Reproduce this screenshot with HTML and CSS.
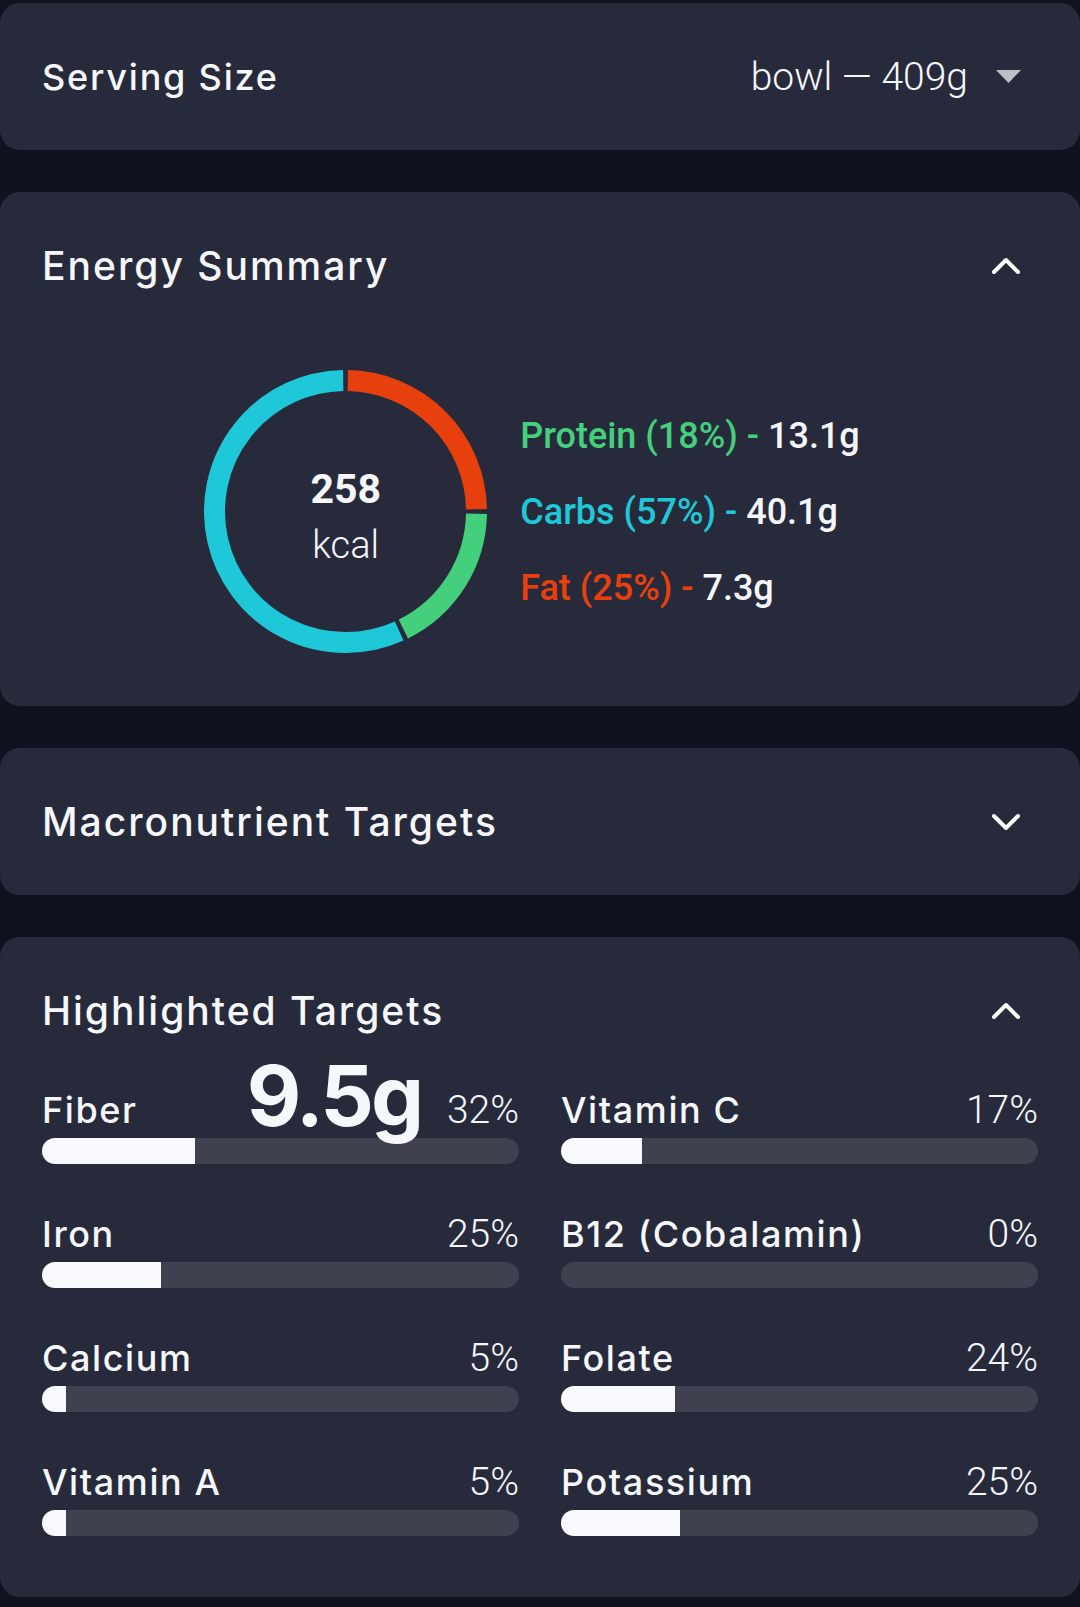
FILE: index.html
```html
<!DOCTYPE html>
<html lang="en">
<head>
    <meta charset="UTF-8">
    <title>Nutrition</title>
    <link rel="stylesheet" href="styles.css">
</head>
<body>
    <section class="card">
        <div class="card-header">
            <h2 class="card-title serving-title">Serving Size</h2>
            <div class="serving-select">
                <span class="serving-value">bowl — 409g</span>
                <svg class="toggle" width="25" height="13" viewBox="0 0 25 13">
                    <polygon points="0,0 25,0 12.5,13" fill="#bfc0c6"/>
                </svg>
            </div>
        </div>
    </section>

    <section class="card">
        <div class="card-header">
            <h2 class="card-title">Energy Summary</h2>
            <svg class="toggle" width="30" height="18" viewBox="0 0 30 18">
                <polyline points="3,15 15,3 27,15" fill="none" stroke="#fff" stroke-width="4" stroke-linecap="round" stroke-linejoin="round"/>
            </svg>
        </div>
        <div class="energy">
            <div class="donut">
                <svg width="283" height="283" viewBox="0 0 283 283">
                    <path d="M143.79 10.52 A131 131 0 0 1 272.48 139.21" fill="none" stroke="#e8400d" stroke-width="21"/>
                    <path d="M272.48 143.79 A131 131 0 0 1 199.34 259.04" fill="none" stroke="#43cf7b" stroke-width="21"/>
                    <path d="M195.20 260.99 A131 131 0 1 1 139.21 10.52" fill="none" stroke="#1ec8d8" stroke-width="21"/>
                </svg>
                <div class="donut-label">
                    <span class="kcal-value">258</span>
                    <span class="kcal-unit">kcal</span>
                </div>
            </div>
            <ul class="legend">
                <li><span class="protein">Protein (18%) -</span> 13.1g</li>
                <li><span class="carbs">Carbs (57%) -</span> 40.1g</li>
                <li><span class="fat">Fat (25%) -</span> 7.3g</li>
            </ul>
        </div>
    </section>

    <section class="card">
        <div class="card-header">
            <h2 class="card-title">Macronutrient Targets</h2>
            <svg class="toggle" width="30" height="18" viewBox="0 0 30 18">
                <polyline points="3,3 15,15 27,3" fill="none" stroke="#fff" stroke-width="4" stroke-linecap="round" stroke-linejoin="round"/>
            </svg>
        </div>
    </section>

    <section class="card">
        <div class="card-header">
            <h2 class="card-title">Highlighted Targets</h2>
            <svg class="toggle" width="30" height="18" viewBox="0 0 30 18">
                <polyline points="3,15 15,3 27,15" fill="none" stroke="#fff" stroke-width="4" stroke-linecap="round" stroke-linejoin="round"/>
            </svg>
        </div>
        <div class="targets">
            <div class="target">
                <div class="target-head">
                    <span class="target-name">Fiber</span>
                    <span class="target-pct">32%</span>
                </div>
                <div class="bar"><div class="bar-fill" style="width: 32%"></div></div>
                <span class="target-amount">9.5g</span>
            </div>
            <div class="target">
                <div class="target-head">
                    <span class="target-name">Vitamin C</span>
                    <span class="target-pct">17%</span>
                </div>
                <div class="bar"><div class="bar-fill" style="width: 17%"></div></div>
            </div>
            <div class="target">
                <div class="target-head">
                    <span class="target-name">Iron</span>
                    <span class="target-pct">25%</span>
                </div>
                <div class="bar"><div class="bar-fill" style="width: 25%"></div></div>
            </div>
            <div class="target">
                <div class="target-head">
                    <span class="target-name">B12 (Cobalamin)</span>
                    <span class="target-pct">0%</span>
                </div>
                <div class="bar"><div class="bar-fill" style="width: 0%"></div></div>
            </div>
            <div class="target">
                <div class="target-head">
                    <span class="target-name">Calcium</span>
                    <span class="target-pct">5%</span>
                </div>
                <div class="bar"><div class="bar-fill" style="width: 5%"></div></div>
            </div>
            <div class="target">
                <div class="target-head">
                    <span class="target-name">Folate</span>
                    <span class="target-pct">24%</span>
                </div>
                <div class="bar"><div class="bar-fill" style="width: 24%"></div></div>
            </div>
            <div class="target">
                <div class="target-head">
                    <span class="target-name">Vitamin A</span>
                    <span class="target-pct">5%</span>
                </div>
                <div class="bar"><div class="bar-fill" style="width: 5%"></div></div>
            </div>
            <div class="target">
                <div class="target-head">
                    <span class="target-name">Potassium</span>
                    <span class="target-pct">25%</span>
                </div>
                <div class="bar"><div class="bar-fill" style="width: 25%"></div></div>
            </div>
        </div>
    </section>
</body>
</html>
```

FILE: styles.css
```css
body {
    margin: 0;
    padding-top: 3px;
    background: #10121f;
    color: #f6f7fb;
    font-family: 'Inter', sans-serif;
}
.card {
    background: #272a3b;
    border-radius: 20px;
    margin-bottom: 42px;
}
.card-header {
    height: 147px;
    padding: 0 42px;
    display: flex;
    align-items: center;
    justify-content: space-between;
}
.card-title {
    margin: 0;
    font-size: 39px;
    font-weight: 500;
    letter-spacing: 2px;
}
.serving-title {
    font-size: 36px;
    letter-spacing: 1.8px;
}
.toggle {
    display: block;
    margin-right: 17px;
}
.serving-select {
    display: flex;
    align-items: center;
    gap: 28px;
}
.serving-value {
    font-family: 'Roboto', sans-serif;
    font-weight: 300;
    font-size: 39px;
}

/* energy summary */
.energy {
    display: flex;
    align-items: center;
    justify-content: center;
    gap: 33px;
    padding: 31px 16px 53px 0;
}
.donut {
    position: relative;
    width: 283px;
    height: 283px;
}
.donut svg {
    display: block;
}
.donut-label {
    position: absolute;
    inset: 0;
    padding-top: 8px;
    display: flex;
    flex-direction: column;
    align-items: center;
    justify-content: center;
    font-family: 'Roboto', sans-serif;
}
.kcal-value {
    font-size: 41px;
    font-weight: 700;
    line-height: 50px;
}
.kcal-unit {
    margin-top: 8px;
    font-size: 38px;
    font-weight: 300;
    line-height: 46px;
}
.legend {
    list-style: none;
    margin: 0;
    padding: 0;
    font-family: 'Roboto', sans-serif;
    font-size: 36px;
    font-weight: 500;
    line-height: 76px;
}
.protein { color: #43cf7b; }
.carbs { color: #1ec8d8; }
.fat { color: #e8400d; }

/* highlighted targets */
.targets {
    display: grid;
    grid-template-columns: 1fr 1fr;
    column-gap: 42px;
    row-gap: 44px;
    padding: 0 42px 61px;
}
.target {
    position: relative;
}
.target-head {
    display: flex;
    justify-content: space-between;
    align-items: baseline;
    padding-top: 4px;
    line-height: 44px;
}
.target-name {
    font-size: 36px;
    font-weight: 500;
    letter-spacing: 1.6px;
}
.target-pct {
    font-family: 'Roboto', sans-serif;
    font-size: 39px;
    font-weight: 300;
}
.bar {
    margin-top: 6px;
    height: 26px;
    border-radius: 13px;
    background: #3f4151;
    overflow: hidden;
}
.bar-fill {
    height: 100%;
    background: #f8f9fd;
}
.target-amount {
    position: absolute;
    top: -30px;
    right: 98px;
    font-size: 84px;
    font-weight: 700;
    line-height: 1;
    letter-spacing: -3px;
}
```
